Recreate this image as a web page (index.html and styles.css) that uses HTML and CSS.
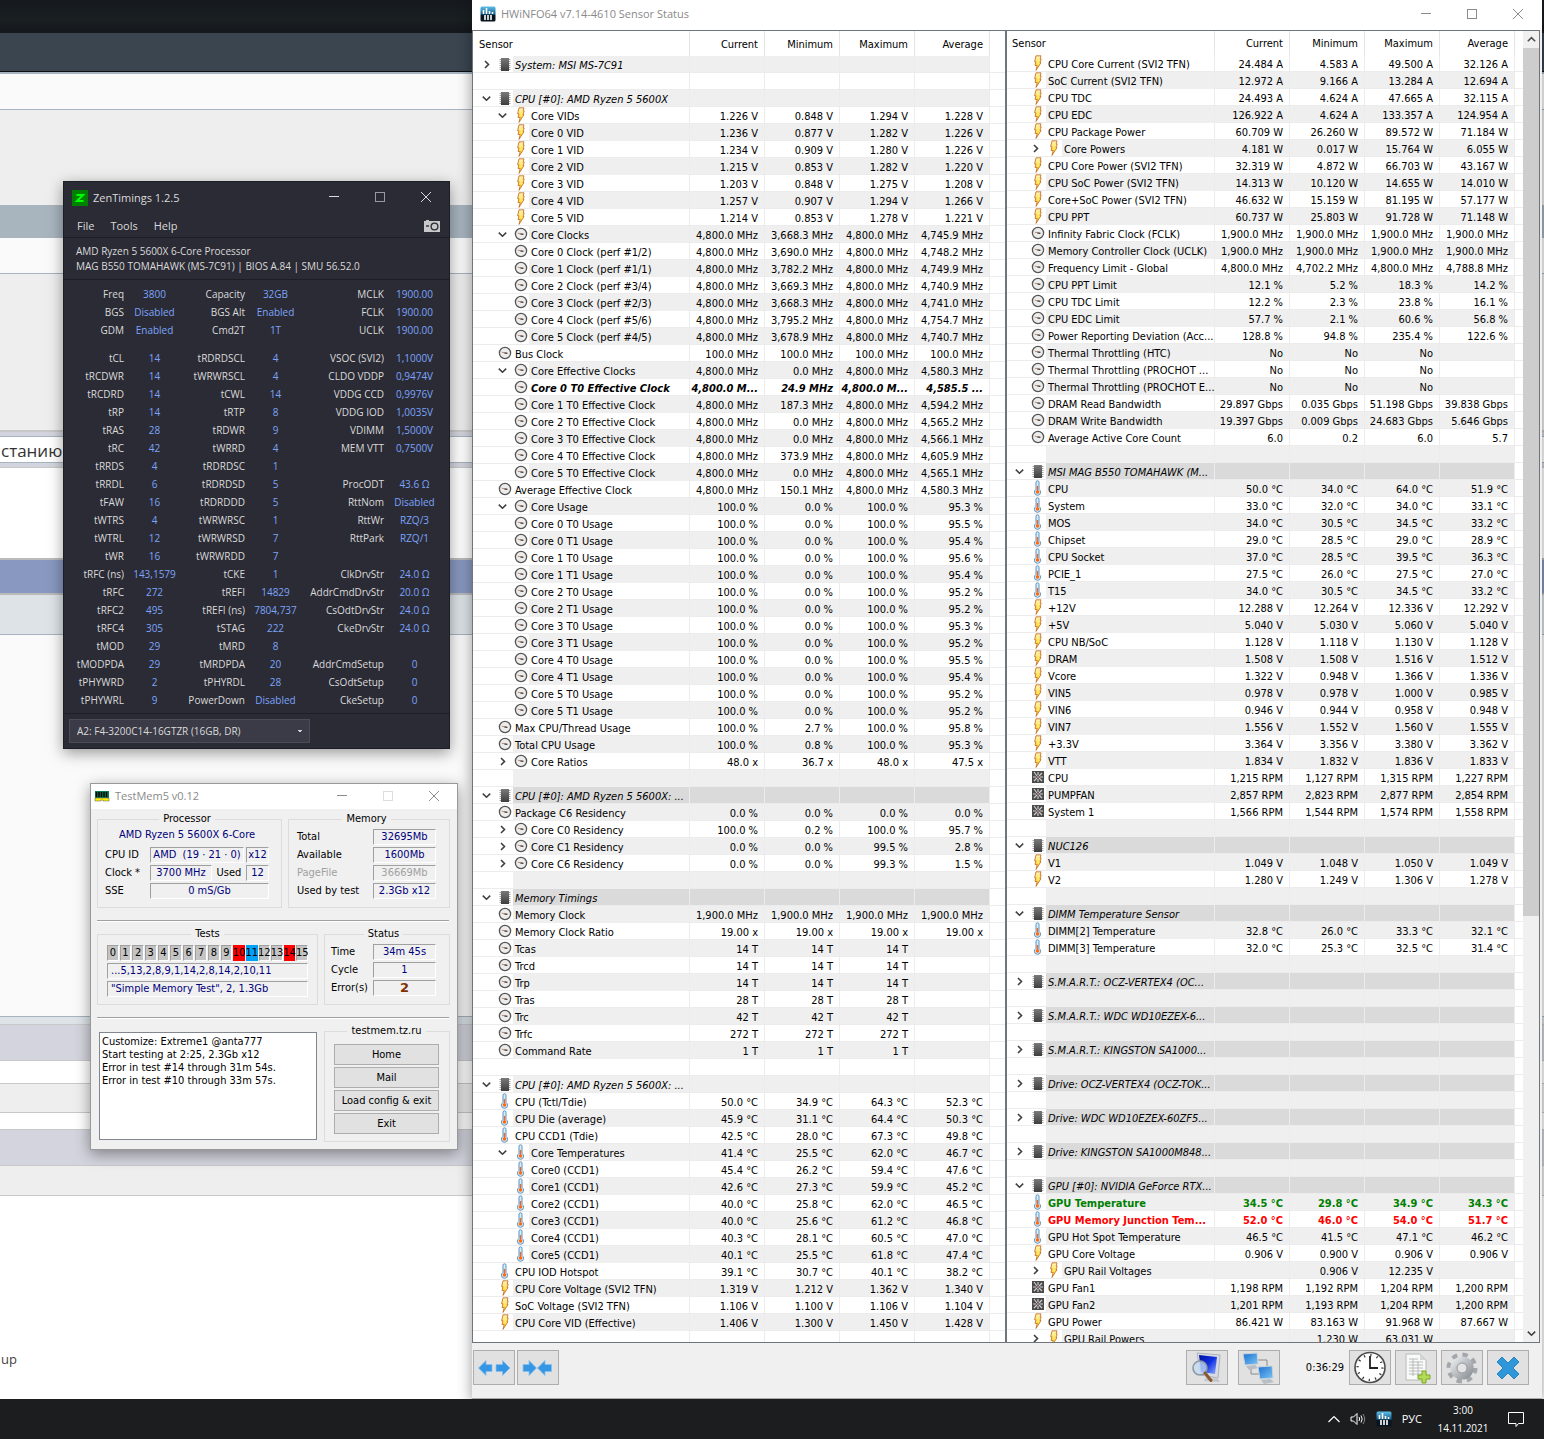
FILE: index.html
```html
<!DOCTYPE html>
<html lang="en">
  <head>
    <meta charset="UTF-8" />
    <meta name="viewport" content="width=device-width, initial-scale=1.0" />
    <title>Memory test desktop</title>
    <link rel="stylesheet" href="styles.css" />
  </head>
  <body>
    <!-- Icons -->
    <svg class="sprite" aria-hidden="true">
      <defs>
        <linearGradient id="g-bolt" x1="0" y1="0" x2="0" y2="1">
          <stop offset="0" stop-color="#fff3b8" />
          <stop offset="1" stop-color="#ffd800" />
        </linearGradient>
        <linearGradient id="g-chip" x1="0" y1="0" x2="0" y2="1">
          <stop offset="0" stop-color="#7a7a7a" />
          <stop offset="1" stop-color="#3e3e40" />
        </linearGradient>
        <linearGradient id="g-hw" x1="0" y1="0" x2="0" y2="1">
          <stop offset="0" stop-color="#5fc0ec" />
          <stop offset="0.5" stop-color="#17608c" />
          <stop offset="0.6" stop-color="#081420" />
        </linearGradient>
        <linearGradient id="g-blue" x1="0" y1="0" x2="1" y2="1">
          <stop offset="0" stop-color="#1a6fd0" />
          <stop offset="1" stop-color="#7cc4f5" />
        </linearGradient>
        <linearGradient id="g-screen" x1="0" y1="0" x2="1" y2="1">
          <stop offset="0" stop-color="#0010a0" />
          <stop offset="0.5" stop-color="#1030e0" />
          <stop offset="1" stop-color="#90b0ff" />
        </linearGradient>
        <linearGradient id="g-steel" x1="0" y1="0" x2="1" y2="1">
          <stop offset="0" stop-color="#e4e6e8" />
          <stop offset="1" stop-color="#8f9499" />
        </linearGradient>
      </defs>
      <symbol id="i-bolt" viewBox="0 0 16 16">
        <path d="M6 .8H11L10.2 4H11.2L10 7.6H11L6 15.4L7.2 10.4H5L6 6.8H4.6Z" fill="url(#g-bolt)" stroke="#c06420" stroke-width=".8" />
      </symbol>
      <symbol id="i-clock" viewBox="0 0 16 16">
        <circle cx="8" cy="8" r="5.6" fill="#ececec" stroke="#555" stroke-width="1.3" />
        <path d="M4.8 7.2L7.6 7.8" stroke="#c08a70" stroke-width="1" />
        <path d="M7.4 7.8L10.4 8.4" stroke="#333" stroke-width="1.2" />
      </symbol>
      <symbol id="i-temp" viewBox="0 0 16 16">
        <path d="M6 2.2Q6 .8 7.5.8T9 2.2V9.4Q10.6 10.6 10.6 12.2A3 3 0 0 1 4.4 12.2Q4.4 10.6 6 9.4Z" fill="#d8ecfa" stroke="#5c93bd" stroke-width="1" />
        <path d="M7.5 6V12" stroke="#e06a30" stroke-width="1.4" />
        <circle cx="7.5" cy="12" r="1.8" fill="#ff6a10" />
      </symbol>
      <symbol id="i-fan" viewBox="0 0 16 16">
        <rect x="2" y="2" width="12" height="12" fill="#4a4a4a" />
        <path d="M4 3L7 7M12 4L9 7M12 12L9 9M4 12L7 9M8 3V6M8 10V13M3 8H6M10 8H13" stroke="#d2d2d2" stroke-width="1.1" />
        <circle cx="8" cy="8" r="1.3" fill="#a08080" />
      </symbol>
      <symbol id="i-chip" viewBox="0 0 16 16">
        <path d="M2.5 3.5H13.5M2.5 5.5H13.5M2.5 7.5H13.5M2.5 9.5H13.5M2.5 11.5H13.5M2.5 13.5H13.5" stroke="#a5a5a5" />
        <rect x="4" y="2" width="8" height="13" fill="url(#g-chip)" />
      </symbol>
      <symbol id="i-right" viewBox="0 0 9 9">
        <path d="M3 1L6.5 4.5L3 8" fill="none" stroke="#404040" stroke-width="1.6" />
      </symbol>
      <symbol id="i-down" viewBox="0 0 9 9">
        <path d="M.8 2.6L4.5 6.2L8.2 2.6" fill="none" stroke="#404040" stroke-width="1.6" />
      </symbol>
      <symbol id="i-up" viewBox="0 0 9 9">
        <path d="M.8 6.2L4.5 2.6L8.2 6.2" fill="none" stroke="#505050" stroke-width="1.6" />
      </symbol>
      <symbol id="i-hwinfo" viewBox="0 0 16 16">
        <rect x=".5" y=".5" width="15" height="15" rx="1.5" fill="url(#g-hw)" />
        <path d="M3.5 4V8M6.5 2V8M9.5 5V8M12.5 6V8M5 9V14M8 9V14M11 9V14" stroke="#fff" stroke-width="1.6" />
      </symbol>
      <symbol id="i-min" viewBox="0 0 12 12">
        <path d="M1 5.5H11" stroke="currentColor" />
      </symbol>
      <symbol id="i-max" viewBox="0 0 12 12">
        <rect x="1.5" y="1.5" width="9" height="9" fill="none" stroke="currentColor" />
      </symbol>
      <symbol id="i-close" viewBox="0 0 12 12">
        <path d="M1 1L11 11M11 1L1 11" stroke="currentColor" />
      </symbol>
    </svg>

    <div class="desktop">
      <!-- Forum page behind the windows -->
      <div class="page">
        <div class="band top-dark"></div>
        <div class="band nav-dark"></div>
        <div class="band light first"></div>
        <div class="band grey tall"></div>
        <div class="band steel"></div>
        <div class="band light"></div>
        <div class="band grey post"></div>
        <div class="band search"><span>станию</span></div>
        <div class="band white reply"></div>
        <div class="band blue"></div>
        <div class="band ice"></div>
        <div class="band light body-text"></div>
        <div class="band ice thin"></div>
        <div class="band lilac"></div>
        <div class="band white gap-a"></div>
        <div class="band grey gap-b"></div>
        <div class="band white gap-c"></div>
        <div class="band lilac"></div>
        <div class="band grey gap-d"></div>
        <div class="band footer">up</div>
      </div>

      <!-- HWiNFO -->
      <section class="window hwinfo">
        <header class="titlebar">
          <svg class="app-icon"><use href="#i-hwinfo" /></svg>
          <h1>HWiNFO64 v7.14-4610 Sensor Status</h1>
          <div class="controls">
            <button aria-label="Minimize"><svg><use href="#i-min" /></svg></button>
            <button aria-label="Maximize"><svg><use href="#i-max" /></svg></button>
            <button aria-label="Close"><svg><use href="#i-close" /></svg></button>
          </div>
        </header>
        <div class="panes">
          <div class="pane pane-left">
            <table class="sensors" id="sensors-left"></table>
          </div>
          <div class="pane pane-right">
            <table class="sensors" id="sensors-right"></table>
            <div class="scrollbar">
              <svg><use href="#i-up" /></svg>
              <div class="track"><div class="thumb"></div></div>
              <svg><use href="#i-down" /></svg>
            </div>
          </div>
        </div>
        <footer class="toolbar">
          <button aria-label="Expand">
            <svg width="36" height="32" viewBox="0 0 36 32">
              <path d="M2.5 16L10 8.5V12.5H16V19.5H10V23.5ZM34 16L26.5 8.5V12.5H20V19.5H26.5V23.5Z" fill="#3496e4" stroke="#8cc0ea" stroke-width=".8" />
            </svg>
          </button>
          <button aria-label="Collapse">
            <svg width="36" height="32" viewBox="0 0 36 32">
              <path d="M16.5 16L9 8.5V12.5H3V19.5H9V23.5ZM17.5 16L25 8.5V12.5H31.5V19.5H25V23.5Z" fill="#3496e4" stroke="#8cc0ea" stroke-width=".8" />
            </svg>
          </button>
          <div class="tools">
            <button aria-label="Summary">
              <svg width="36" height="32" viewBox="0 0 36 32">
                <path d="M8 1L31 3L29 26L12 23Z" fill="#d8dce2" stroke="#aeb3bb" />
                <path d="M10 3L28 5L26 22L12 20Z" fill="url(#g-screen)" />
                <path d="M17 25L29 27L31 30L15 29Z" fill="#c2c6cb" />
                <circle cx="11" cy="16" r="7" fill="#c4dcf4" fill-opacity=".8" stroke="#8d98a5" stroke-width="1.6" />
                <path d="M16 21L22 28.5" stroke="#8a5a30" stroke-width="3" stroke-linecap="round" />
              </svg>
            </button>
            <button aria-label="Remote monitoring">
              <svg width="36" height="32" viewBox="0 0 36 32">
                <path d="M17 8H26V15M10 15V22H19" fill="none" stroke="#8b8b8b" />
                <path d="M5 14L14 13L17 16L8 18ZM20 28L29 27L33 30L23 32Z" fill="#b9bec4" />
                <path d="M2 2L16 1L17 12L4 13Z" fill="url(#g-blue)" stroke="#c9d2da" />
                <path d="M17 15L31 14L32 26L19 27Z" fill="url(#g-blue)" stroke="#c9d2da" />
              </svg>
            </button>
          </div>
          <span class="elapsed">0:36:29</span>
          <div class="actions">
            <button aria-label="Reset clock">
              <svg width="36" height="33" viewBox="0 0 36 33">
                <circle cx="18" cy="16.5" r="15" fill="#fff" stroke="#4a4a4a" stroke-width="1.6" />
                <circle cx="18" cy="16.5" r="12.4" fill="none" stroke="#333" stroke-width="2.4" stroke-dasharray="1.2 5.29" />
                <path d="M18 5V17H26" fill="none" stroke="#222" stroke-width="1.8" />
              </svg>
            </button>
            <button aria-label="Logging">
              <svg width="36" height="32" viewBox="0 0 36 32">
                <path d="M8 2H22L28 8V28H8Z" fill="#f8f9f8" stroke="#b8bcb8" />
                <path d="M22 2V8H28Z" fill="#d4d8d4" />
                <path d="M11 7H20M11 10H25M11 13H25M11 16H25M11 19H25M11 22H25M15 7V24M20 9V24" stroke="#a8b0ac" stroke-width=".8" />
                <path d="M24 19H28V23H32V27H28V31H24V27H20V23H24Z" fill="#b4dc50" stroke="#7aa828" />
              </svg>
            </button>
            <button aria-label="Settings">
              <svg width="36" height="32" viewBox="0 0 36 32">
                <circle cx="18" cy="16" r="13" fill="none" stroke="#a3a7ab" stroke-width="5" stroke-dasharray="5.2 5.01" />
                <circle cx="18" cy="16" r="8.4" fill="none" stroke="url(#g-steel)" stroke-width="6.4" />
                <circle cx="18" cy="16" r="5" fill="#e4e4e4" stroke="#8f9499" />
              </svg>
            </button>
            <button aria-label="Close sensors">
              <svg width="36" height="32" viewBox="0 0 36 32">
                <path d="M12 5L18 11L24 5L29 10L23 16L29 22L24 27L18 21L12 27L7 22L13 16L7 10Z" fill="#2f97d8" stroke="#2484c2" />
              </svg>
            </button>
          </div>
        </footer>
      </section>

      <!-- ZenTimings -->
      <section class="window zen">
        <header class="titlebar">
          <svg class="app-icon" viewBox="0 0 16 16">
            <rect width="16" height="16" fill="#008000" />
            <path d="M4.5 5H11L5 11H11.5" fill="none" stroke="#0f0" stroke-width="2" />
          </svg>
          <h2>ZenTimings 1.2.5</h2>
          <div class="controls">
            <button aria-label="Minimize"><svg><use href="#i-min" /></svg></button>
            <button aria-label="Maximize" class="dim"><svg><use href="#i-max" /></svg></button>
            <button aria-label="Close"><svg><use href="#i-close" /></svg></button>
          </div>
        </header>
        <nav class="menu">
          <button>File</button>
          <button>Tools</button>
          <button>Help</button>
          <button class="camera" aria-label="Screenshot">
            <svg width="16" height="12" viewBox="0 0 16 12">
              <path d="M0 1H2V0H5V1H16V12H0Z" fill="#c8c8c8" />
              <path d="M2 6H5" stroke="#2b2b35" stroke-width="1.4" />
              <circle cx="10.5" cy="6.5" r="3.4" fill="#c8c8c8" stroke="#2b2b35" stroke-width="1.3" />
            </svg>
          </button>
        </nav>
        <div class="system">
          <p>AMD Ryzen 5 5600X 6-Core Processor</p>
          <p>MAG B550 TOMAHAWK (MS-7C91) | BIOS A.84 | SMU 56.52.0</p>
        </div>
        <table class="timings" id="timings"></table>
        <div class="module">
          <select aria-label="Memory module">
            <option>A2: F4-3200C14-16GTZR (16GB, DR)</option>
          </select>
        </div>
      </section>

      <!-- TestMem5 -->
      <section class="window testmem">
        <header class="titlebar">
          <svg class="app-icon" viewBox="0 0 16 16">
            <rect x="1" y="3" width="14" height="7" fill="#0a7a50" />
            <path d="M2.5 4V9M5 4V9M7.5 4V9M10 4V9M12.5 4V9" stroke="#000" stroke-width="1.4" />
            <path d="M1 10H15V13H9V12H7V13H1Z" fill="#ffee00" stroke="#555" stroke-width=".5" />
          </svg>
          <h2>TestMem5 v0.12</h2>
          <div class="controls">
            <button aria-label="Minimize"><svg><use href="#i-min" /></svg></button>
            <button aria-label="Maximize" disabled><svg><use href="#i-max" /></svg></button>
            <button aria-label="Close"><svg><use href="#i-close" /></svg></button>
          </div>
        </header>
        <div class="tm-row">
          <fieldset class="processor">
            <legend>Processor</legend>
            <p class="cpu-name">AMD Ryzen 5 5600X 6-Core</p>
            <div class="line">
              <span class="name">CPU ID</span>
              <span class="field grow">AMD&nbsp; (19 · 21 · 0)</span>
              <span class="field small">x12</span>
            </div>
            <div class="line">
              <span class="name">Clock *</span>
              <span class="field grow">3700 MHz</span>
              <span class="used">Used</span>
              <span class="field small">12</span>
            </div>
            <div class="line">
              <span class="name">SSE</span>
              <span class="field grow">0 mS/Gb</span>
            </div>
          </fieldset>
          <fieldset class="memory">
            <legend>Memory</legend>
            <div class="line"><span>Total</span><span class="field">32695Mb</span></div>
            <div class="line"><span>Available</span><span class="field">1600Mb</span></div>
            <div class="line off"><span>PageFile</span><span class="field">36669Mb</span></div>
            <div class="line"><span>Used by test</span><span class="field">2.3Gb x12</span></div>
          </fieldset>
        </div>
        <hr />
        <div class="tm-row">
          <fieldset class="tests">
            <legend>Tests</legend>
            <div class="cells">
              <span>0</span><span>1</span><span>2</span><span>3</span><span>4</span><span>5</span><span>6</span><span>7</span><span>8</span><span>9</span><span class="failed">10</span><span class="running">11</span><span>12</span><span>13</span><span class="failed">14</span><span>15</span>
            </div>
            <p class="field">...5,13,2,8,9,1,14,2,8,14,2,10,11</p>
            <p class="field">"Simple Memory Test", 2, 1.3Gb</p>
          </fieldset>
          <fieldset class="status">
            <legend>Status</legend>
            <div class="line"><span>Time</span><span class="field">34m 45s</span></div>
            <div class="line"><span>Cycle</span><span class="field">1</span></div>
            <div class="line"><span>Error(s)</span><span class="field errors">2</span></div>
          </fieldset>
        </div>
        <hr />
        <div class="tm-row tm-bottom">
          <textarea aria-label="Log" readonly>
Customize: Extreme1 @anta777
Start testing at 2:25, 2.3Gb x12
Error in test #14 through 31m 54s.
Error in test #10 through 33m 57s.</textarea>
          <fieldset class="links">
            <legend>testmem.tz.ru</legend>
            <button>Home</button>
            <button>Mail</button>
            <button>Load config &amp; exit</button>
            <button>Exit</button>
          </fieldset>
        </div>
      </section>

      <!-- Taskbar -->
      <footer class="taskbar">
        <svg width="12" height="12" viewBox="0 0 12 12"><path d="M.5 9L6 3.5L11.5 9" fill="none" stroke="#fff" stroke-width="1.2" /></svg>
        <svg width="16" height="16" viewBox="0 0 16 16">
          <path d="M1 6H3.5L7 2.5V13.5L3.5 10H1Z" fill="none" stroke="#fff" />
          <path d="M9 6Q10.4 8 9 10M11 4.5Q13.4 8 11 11.5" fill="none" stroke="#fff" />
          <path d="M13 3Q16.4 8 13 13" fill="none" stroke="#888" />
        </svg>
        <svg width="16" height="16"><use href="#i-hwinfo" /></svg>
        <span class="lang">РУС</span>
        <div class="clock">3:00<br />14.11.2021</div>
        <svg class="notes" width="16" height="17" viewBox="0 0 16 17"><path d="M.5 1.5H15.5V12.5H10.5L8 15.5V12.5H.5Z" fill="none" stroke="#fff" /></svg>
      </footer>
    </div>

    <script src="script.js"></script>
  </body>
</html>
```
FILE: styles.css
```css
:root {
  --ui: "Open Sans", "Noto Sans", sans-serif;
  --dialog: "DejaVu Sans Condensed", "DejaVu Sans", sans-serif;
}
* {
  box-sizing: border-box;
}
body {
  margin: 0;
  font-family: var(--dialog);
  font-size: 11px;
  color: #000;
}
h1,
h2,
p {
  margin: 0;
  font-size: inherit;
  font-weight: normal;
}
button {
  font: inherit;
  color: inherit;
  padding: 0;
}
.sprite {
  position: absolute;
  width: 0;
  height: 0;
}
.desktop {
  position: relative;
  height: 100vh;
  overflow: hidden;
  background: #fff;
}

/* Forum page */
.band {
  height: 36px;
  border-bottom: 1px solid #c8c8c8;
}
.top-dark {
  height: 33px;
  border: 0;
  background: linear-gradient(#15191e, #1a1f22 60%, #14171b);
}
.nav-dark {
  height: 39px;
  background: #3a4550;
  border-color: #0c0f12;
}
.light {
  background: #fafafa;
  border-color: #a5b4c0;
}
.first {
  height: 38px;
  border-top: 2px solid #a5b4c0;
}
.grey {
  background: #eee;
}
.white {
  background: #fff;
}
.tall {
  height: 95px;
  border: 0;
}
.steel {
  height: 33px;
  background: #a8b5bf;
  border: 0;
}
.post {
  height: 158px;
  border-bottom: 2px solid #c8c8c8;
}
.search {
  padding: 4px 0;
  background: #d4d4de;
  font: 17px/24px var(--ui);
  color: #333;
}
.search span {
  display: block;
  height: 27px;
  padding: 2px 0 0 1px;
  border: 1px solid #a5b4c0;
  border-width: 1px 0;
  background: #fff;
}
.reply {
  height: 92px;
  border-bottom: 2px solid #bbb;
}
.blue {
  height: 35px;
  background: #8898c0;
  border-bottom: 2px solid #bbb;
}
.ice {
  height: 40px;
  background: #dde3e7;
  border-color: #a5b4c0;
}
.body-text {
  height: 382px;
}
.thin {
  height: 8px;
  border-color: #c8c8c8;
}
.lilac {
  background: #d4d4de;
}
.gap-a {
  height: 23px;
}
.gap-b {
  height: 29px;
}
.gap-c {
  height: 17px;
}
.gap-d {
  height: 30px;
}
.footer {
  height: auto;
  border: 0;
  padding: 153px 0 0 1px;
  font: 13px/20px var(--ui);
  color: #444;
}

/* Windows */
.window {
  position: absolute;
  display: flex;
  flex-direction: column;
  box-shadow: 0 4px 14px rgba(0, 0, 0, 0.4);
}
.titlebar {
  display: flex;
  align-items: center;
  height: 30px;
  padding-bottom: 2px;
  font: 11px/16px var(--ui);
}
.titlebar .app-icon {
  width: 16px;
  height: 16px;
  margin: 0 5px 0 8px;
}
.controls {
  display: flex;
  margin-left: auto;
}
.controls button {
  display: flex;
  align-items: center;
  justify-content: center;
  width: 46px;
  height: 28px;
  border: 0;
  background: none;
}
.controls svg {
  width: 12px;
  height: 12px;
}

/* HWiNFO */
.hwinfo {
  top: 0;
  left: 472px;
  right: 2px;
  bottom: 40px;
  border-bottom: 1px solid #aaa;
  background: #f0f0f0;
}
.hwinfo .titlebar {
  padding-right: 1px;
  background: #fff;
  color: #8a8a8a;
}
.panes {
  display: flex;
  flex: 1;
  min-height: 0;
  margin-right: 2px;
}
.pane {
  flex: 1;
  display: flex;
  align-items: flex-start;
  min-width: 0;
  overflow: hidden;
  border: 1px solid #70757c;
  background: #fff;
}
.sensors {
  flex: 1;
  table-layout: fixed;
  width: 100%;
  border-collapse: separate;
  border-spacing: 0;
}
.sensors .col-name {
  width: 208px;
}
.pane-left .col-name {
  width: 217px;
}
.sensors .col-value {
  width: 75px;
}
.sensors th {
  height: 24px;
  padding: 0 6px 0 5px;
  border-right: 1px solid #e5e5e5;
  font-weight: normal;
  text-align: right;
}
.pane-left th {
  height: 25px;
  padding: 1px 6px 0;
}
.sensors th:first-child {
  text-align: left;
}
.sensors th:last-child {
  border: 0;
}
.sensors td {
  height: 17px;
  padding: 3px 6px 0 0;
  border: solid #ececec;
  border-width: 0 1px 1px 0;
  line-height: 13px;
  text-align: right;
  white-space: nowrap;
}
.sensors td:first-child {
  padding: 0;
}
.sensors td:last-child {
  border-right: 0;
}
.cell {
  display: flex;
  height: 16px;
  text-align: left;
}
.lead {
  flex: none;
  width: 23px;
  padding: 4px 6px 0 0;
}
.pane-left .lead {
  width: 24px;
}
.lead svg {
  display: block;
  width: 9px;
  height: 9px;
  margin-left: auto;
}
.nested .lead {
  width: 39px;
}
.pane-left .nested .lead {
  width: 40px;
}
.cell .icon {
  flex: none;
  width: 16px;
  height: 16px;
}
.text {
  flex: 1;
  min-width: 0;
  height: 17px;
  padding: 3px 0 0 2px;
}
.pane-left tr:nth-child(odd) .text,
.pane-left tr:nth-child(odd) .value,
.pane-right tr:nth-child(even) .text,
.pane-right tr:nth-child(even) .value {
  background: #efefef;
}
.sensors .section .text,
.sensors .section .value {
  background: #dadada;
}
.section .text {
  height: 16px;
  font-style: italic;
}
.watched {
  font-weight: bold;
  font-style: italic;
}
.good {
  font-weight: bold;
  color: #008000;
}
.bad {
  font-weight: bold;
  color: #f00;
}
.scrollbar {
  display: flex;
  flex-direction: column;
  align-items: center;
  align-self: stretch;
  width: 16px;
  background: #f0f0f0;
}
.scrollbar svg {
  width: 9px;
  height: 9px;
  margin: 4px 0;
}
.track {
  flex: 1;
  width: 100%;
}
.thumb {
  height: 68%;
  background: #cdcdcd;
}
.toolbar {
  display: flex;
  align-items: center;
  gap: 2px;
  height: 55px;
  padding: 0 13px 6px 1px;
}
.toolbar button {
  display: flex;
  align-items: center;
  justify-content: center;
  width: 42px;
  height: 35px;
  border: 1px solid #adadad;
  background: #e1e1e1;
}
.tools {
  display: flex;
  gap: 10px;
  margin-left: auto;
}
.elapsed {
  width: 62px;
  text-align: right;
}
.actions {
  display: flex;
  gap: 4px;
  margin-left: 3px;
}

/* ZenTimings */
.zen {
  top: 181px;
  left: 63px;
  width: 387px;
  border: 1px solid #1d1d26;
  background: #2b2b35;
  color: #dadada;
  font: 10px/18px var(--ui);
}
.zen .titlebar {
  height: 32px;
  padding-bottom: 0;
}
.zen .controls {
  padding-bottom: 2px;
}
.zen .dim {
  color: #9a9a9e;
}
.menu {
  display: flex;
  align-items: center;
  height: 24px;
  padding: 0 9px 0 13px;
  border-bottom: 1px solid #1d1d26;
  font-size: 11px;
}
.menu button {
  margin-right: 16px;
  border: 0;
  background: none;
}
.menu .camera {
  display: flex;
  margin: 0 0 0 auto;
}
.system {
  padding: 6px 12px 5px;
  border-bottom: 1px solid #1d1d26;
  line-height: 15px;
}
.timings {
  table-layout: fixed;
  width: 381px;
  margin: 5px 0 4px;
  border-collapse: collapse;
}
.timings th,
.timings td {
  width: 61px;
  height: 18px;
  padding: 0;
  line-height: 18px;
  white-space: nowrap;
}
.timings th {
  width: 60px;
  font-weight: normal;
  text-align: right;
}
.timings th:nth-child(5) {
  width: 78px;
}
.timings td {
  color: #7ba4fa;
  text-align: center;
}
.timings .spaced th,
.timings .spaced td {
  height: 28px;
  padding-top: 10px;
}
.module {
  padding: 5px;
  border-top: 1px solid #1d1d26;
}
.module select {
  appearance: none;
  display: block;
  width: 241px;
  height: 24px;
  padding: 0 7px;
  border: 1px solid #4b4b58;
  border-radius: 0;
  background: conic-gradient(from 315deg at 50% 100%, #d2d2d2 90deg, transparent 0) right 6px top 10px / 6px 3px no-repeat, #3b3b47;
  color: #dadada;
  font: 10px/20px var(--ui);
}

/* TestMem5 */
.testmem {
  top: 783px;
  left: 90px;
  width: 368px;
  height: 367px;
  border: 1px solid #999;
  background: #f0f0f0;
}
.testmem .titlebar {
  height: 25px;
  margin-bottom: 3px;
  background: #fff;
  color: #8a8a8a;
}
.testmem .app-icon {
  margin-left: 3px;
}
.testmem .controls button:disabled {
  color: #ddd;
}
.tm-row {
  display: flex;
  gap: 6px;
  padding: 0 7px 0 6px;
}
fieldset {
  min-width: 0;
  margin: 0;
  padding: 0 9px;
  border: 1px solid #dcdcdc;
}
legend {
  height: 14px;
  margin: 0 auto;
  padding: 0 4px;
  line-height: 14px;
  text-align: center;
}
.processor,
.memory {
  height: 96px;
}
.processor {
  width: 185px;
  padding: 1px 12px 0 7px;
}
.memory {
  flex: 1;
  padding: 3px 13px 0 8px;
}
.cpu-name {
  margin-bottom: 4px;
  line-height: 16px;
  text-align: center;
  color: #00007b;
}
.line {
  display: flex;
  gap: 2px;
  justify-content: space-between;
  margin-bottom: 2px;
  line-height: 16px;
}
.name {
  width: 43px;
}
.used {
  width: 30px;
  text-align: center;
}
.field {
  height: 16px;
  border: 1px solid;
  border-color: #a0a0a0 #fff #fff #a0a0a0;
  line-height: 14px;
  text-align: center;
  white-space: nowrap;
  color: #00007b;
}
.grow {
  flex: 1;
}
.small {
  width: 23px;
}
.memory .field,
.status .field {
  width: 63px;
}
.off,
.off .field {
  color: #a0a0a0;
}
.testmem hr {
  width: 352px;
  height: 2px;
  margin: 12px 6px 5px;
  border: 0;
  border-top: 1px solid #a0a0a0;
  border-bottom: 1px solid #fff;
}
.tests {
  width: 221px;
  padding-bottom: 5px;
}
.status {
  flex: 1;
  padding: 3px 13px 0 6px;
}
.cells {
  display: flex;
  gap: 1px;
  margin: 4px 0 2px;
}
.cells span {
  display: flex;
  flex: 1;
  justify-content: center;
  min-width: 0;
  height: 16px;
  border: 1px solid;
  border-color: #a0a0a0 #fff #fff #a0a0a0;
  background: #c4c4c4;
  line-height: 14px;
}
.cells .failed {
  background: #f00;
  border-color: #f00;
}
.cells .running {
  background: #00a2f8;
  border-color: #00a2f8;
}
.tests .field {
  margin-bottom: 2px;
  padding-left: 3px;
  text-align: left;
}
.status .errors {
  font: bold 13px/14px "DejaVu Sans", sans-serif;
  color: #803000;
}
.tm-bottom textarea {
  width: 218px;
  height: 108px;
  margin: 8px 1px 0 2px;
  padding: 2px;
  border: 1px solid #82878f;
  background: #fff;
  color: #000;
  font: 11px/13px var(--dialog);
  resize: none;
}
.links {
  flex: 1;
  height: 118px;
  padding: 6px 10px 0 9px;
}
.links button {
  display: block;
  width: 100%;
  height: 21px;
  margin-bottom: 2px;
  border: 1px solid #adadad;
  background: #e1e1e1;
}

/* Taskbar */
.taskbar {
  position: absolute;
  left: 0;
  right: 0;
  bottom: 0;
  display: flex;
  align-items: center;
  justify-content: flex-end;
  gap: 10px;
  height: 40px;
  padding-right: 20px;
  background: #1b1d1f;
  color: #fff;
  font: 11px/18px var(--ui);
}
.lang {
  margin-right: 4px;
}
.clock {
  width: 54px;
  font-size: 10px;
  text-align: center;
}
.notes {
  margin-left: 8px;
}
```
FILE: script.js
```js
// Row format: level + arrow + icon | name | current | minimum | maximum | average | style
// arrows: v open, > closed, - none
// icons: s section, b bolt, c clock, t temperature, f fan
const left = `
0>s|System: MSI MS-7C91

0vs|CPU [#0]: AMD Ryzen 5 5600X
1vb|Core VIDs|1.226 V|0.848 V|1.294 V|1.228 V
1-b|Core 0 VID|1.236 V|0.877 V|1.282 V|1.226 V
1-b|Core 1 VID|1.234 V|0.909 V|1.280 V|1.226 V
1-b|Core 2 VID|1.215 V|0.853 V|1.282 V|1.220 V
1-b|Core 3 VID|1.203 V|0.848 V|1.275 V|1.208 V
1-b|Core 4 VID|1.257 V|0.907 V|1.294 V|1.266 V
1-b|Core 5 VID|1.214 V|0.853 V|1.278 V|1.221 V
1vc|Core Clocks|4,800.0 MHz|3,668.3 MHz|4,800.0 MHz|4,745.9 MHz
1-c|Core 0 Clock (perf #1/2)|4,800.0 MHz|3,690.0 MHz|4,800.0 MHz|4,748.2 MHz
1-c|Core 1 Clock (perf #1/1)|4,800.0 MHz|3,782.2 MHz|4,800.0 MHz|4,749.9 MHz
1-c|Core 2 Clock (perf #3/4)|4,800.0 MHz|3,669.3 MHz|4,800.0 MHz|4,740.9 MHz
1-c|Core 3 Clock (perf #2/3)|4,800.0 MHz|3,668.3 MHz|4,800.0 MHz|4,741.0 MHz
1-c|Core 4 Clock (perf #5/6)|4,800.0 MHz|3,795.2 MHz|4,800.0 MHz|4,754.7 MHz
1-c|Core 5 Clock (perf #4/5)|4,800.0 MHz|3,678.9 MHz|4,800.0 MHz|4,740.7 MHz
0-c|Bus Clock|100.0 MHz|100.0 MHz|100.0 MHz|100.0 MHz
1vc|Core Effective Clocks|4,800.0 MHz|0.0 MHz|4,800.0 MHz|4,580.3 MHz
1-c|Core 0 T0 Effective Clock|4,800.0 M...|24.9 MHz|4,800.0 M...|4,585.5 ...|watched
1-c|Core 1 T0 Effective Clock|4,800.0 MHz|187.3 MHz|4,800.0 MHz|4,594.2 MHz
1-c|Core 2 T0 Effective Clock|4,800.0 MHz|0.0 MHz|4,800.0 MHz|4,565.2 MHz
1-c|Core 3 T0 Effective Clock|4,800.0 MHz|0.0 MHz|4,800.0 MHz|4,566.1 MHz
1-c|Core 4 T0 Effective Clock|4,800.0 MHz|373.9 MHz|4,800.0 MHz|4,605.9 MHz
1-c|Core 5 T0 Effective Clock|4,800.0 MHz|0.0 MHz|4,800.0 MHz|4,565.1 MHz
0-c|Average Effective Clock|4,800.0 MHz|150.1 MHz|4,800.0 MHz|4,580.3 MHz
1vc|Core Usage|100.0 %|0.0 %|100.0 %|95.3 %
1-c|Core 0 T0 Usage|100.0 %|0.0 %|100.0 %|95.5 %
1-c|Core 0 T1 Usage|100.0 %|0.0 %|100.0 %|95.4 %
1-c|Core 1 T0 Usage|100.0 %|0.0 %|100.0 %|95.6 %
1-c|Core 1 T1 Usage|100.0 %|0.0 %|100.0 %|95.4 %
1-c|Core 2 T0 Usage|100.0 %|0.0 %|100.0 %|95.2 %
1-c|Core 2 T1 Usage|100.0 %|0.0 %|100.0 %|95.2 %
1-c|Core 3 T0 Usage|100.0 %|0.0 %|100.0 %|95.3 %
1-c|Core 3 T1 Usage|100.0 %|0.0 %|100.0 %|95.2 %
1-c|Core 4 T0 Usage|100.0 %|0.0 %|100.0 %|95.5 %
1-c|Core 4 T1 Usage|100.0 %|0.0 %|100.0 %|95.4 %
1-c|Core 5 T0 Usage|100.0 %|0.0 %|100.0 %|95.2 %
1-c|Core 5 T1 Usage|100.0 %|0.0 %|100.0 %|95.2 %
0-c|Max CPU/Thread Usage|100.0 %|2.7 %|100.0 %|95.8 %
0-c|Total CPU Usage|100.0 %|0.8 %|100.0 %|95.3 %
1>c|Core Ratios|48.0 x|36.7 x|48.0 x|47.5 x

0vs|CPU [#0]: AMD Ryzen 5 5600X: ...
0-c|Package C6 Residency|0.0 %|0.0 %|0.0 %|0.0 %
1>c|Core C0 Residency|100.0 %|0.2 %|100.0 %|95.7 %
1>c|Core C1 Residency|0.0 %|0.0 %|99.5 %|2.8 %
1>c|Core C6 Residency|0.0 %|0.0 %|99.3 %|1.5 %

0vs|Memory Timings
0-c|Memory Clock|1,900.0 MHz|1,900.0 MHz|1,900.0 MHz|1,900.0 MHz
0-c|Memory Clock Ratio|19.00 x|19.00 x|19.00 x|19.00 x
0-c|Tcas|14 T|14 T|14 T|
0-c|Trcd|14 T|14 T|14 T|
0-c|Trp|14 T|14 T|14 T|
0-c|Tras|28 T|28 T|28 T|
0-c|Trc|42 T|42 T|42 T|
0-c|Trfc|272 T|272 T|272 T|
0-c|Command Rate|1 T|1 T|1 T|

0vs|CPU [#0]: AMD Ryzen 5 5600X: ...
0-t|CPU (Tctl/Tdie)|50.0 °C|34.9 °C|64.3 °C|52.3 °C
0-t|CPU Die (average)|45.9 °C|31.1 °C|64.4 °C|50.3 °C
0-t|CPU CCD1 (Tdie)|42.5 °C|28.0 °C|67.3 °C|49.8 °C
1vt|Core Temperatures|41.4 °C|25.5 °C|62.0 °C|46.7 °C
1-t|Core0 (CCD1)|45.4 °C|26.2 °C|59.4 °C|47.6 °C
1-t|Core1 (CCD1)|42.6 °C|27.3 °C|59.9 °C|45.2 °C
1-t|Core2 (CCD1)|40.0 °C|25.8 °C|62.0 °C|46.5 °C
1-t|Core3 (CCD1)|40.0 °C|25.6 °C|61.2 °C|46.8 °C
1-t|Core4 (CCD1)|40.3 °C|28.1 °C|60.5 °C|47.0 °C
1-t|Core5 (CCD1)|40.1 °C|25.5 °C|61.8 °C|47.4 °C
0-t|CPU IOD Hotspot|39.1 °C|30.7 °C|40.1 °C|38.2 °C
0-b|CPU Core Voltage (SVI2 TFN)|1.319 V|1.212 V|1.362 V|1.340 V
0-b|SoC Voltage (SVI2 TFN)|1.106 V|1.100 V|1.106 V|1.104 V
0-b|CPU Core VID (Effective)|1.406 V|1.300 V|1.450 V|1.428 V

`;

const right = `
0-b|CPU Core Current (SVI2 TFN)|24.484 A|4.583 A|49.500 A|32.126 A
0-b|SoC Current (SVI2 TFN)|12.972 A|9.166 A|13.284 A|12.694 A
0-b|CPU TDC|24.493 A|4.624 A|47.665 A|32.115 A
0-b|CPU EDC|126.922 A|4.624 A|133.357 A|124.954 A
0-b|CPU Package Power|60.709 W|26.260 W|89.572 W|71.184 W
1>b|Core Powers|4.181 W|0.017 W|15.764 W|6.055 W
0-b|CPU Core Power (SVI2 TFN)|32.319 W|4.872 W|66.703 W|43.167 W
0-b|CPU SoC Power (SVI2 TFN)|14.313 W|10.120 W|14.655 W|14.010 W
0-b|Core+SoC Power (SVI2 TFN)|46.632 W|15.159 W|81.195 W|57.177 W
0-b|CPU PPT|60.737 W|25.803 W|91.728 W|71.148 W
0-c|Infinity Fabric Clock (FCLK)|1,900.0 MHz|1,900.0 MHz|1,900.0 MHz|1,900.0 MHz
0-c|Memory Controller Clock (UCLK)|1,900.0 MHz|1,900.0 MHz|1,900.0 MHz|1,900.0 MHz
0-c|Frequency Limit - Global|4,800.0 MHz|4,702.2 MHz|4,800.0 MHz|4,788.8 MHz
0-c|CPU PPT Limit|12.1 %|5.2 %|18.3 %|14.2 %
0-c|CPU TDC Limit|12.2 %|2.3 %|23.8 %|16.1 %
0-c|CPU EDC Limit|57.7 %|2.1 %|60.6 %|56.8 %
0-c|Power Reporting Deviation (Acc...|128.8 %|94.8 %|235.4 %|122.6 %
0-c|Thermal Throttling (HTC)|No|No|No|
0-c|Thermal Throttling (PROCHOT ...|No|No|No|
0-c|Thermal Throttling (PROCHOT E...|No|No|No|
0-c|DRAM Read Bandwidth|29.897 Gbps|0.035 Gbps|51.198 Gbps|39.838 Gbps
0-c|DRAM Write Bandwidth|19.397 Gbps|0.009 Gbps|24.683 Gbps|5.646 Gbps
0-c|Average Active Core Count|6.0|0.2|6.0|5.7

0vs|MSI MAG B550 TOMAHAWK (M...
0-t|CPU|50.0 °C|34.0 °C|64.0 °C|51.9 °C
0-t|System|33.0 °C|32.0 °C|34.0 °C|33.1 °C
0-t|MOS|34.0 °C|30.5 °C|34.5 °C|33.2 °C
0-t|Chipset|29.0 °C|28.5 °C|29.0 °C|28.9 °C
0-t|CPU Socket|37.0 °C|28.5 °C|39.5 °C|36.3 °C
0-t|PCIE_1|27.5 °C|26.0 °C|27.5 °C|27.0 °C
0-t|T15|34.0 °C|30.5 °C|34.5 °C|33.2 °C
0-b|+12V|12.288 V|12.264 V|12.336 V|12.292 V
0-b|+5V|5.040 V|5.030 V|5.060 V|5.040 V
0-b|CPU NB/SoC|1.128 V|1.118 V|1.130 V|1.128 V
0-b|DRAM|1.508 V|1.508 V|1.516 V|1.512 V
0-b|Vcore|1.322 V|0.948 V|1.366 V|1.336 V
0-b|VIN5|0.978 V|0.978 V|1.000 V|0.985 V
0-b|VIN6|0.946 V|0.944 V|0.958 V|0.948 V
0-b|VIN7|1.556 V|1.552 V|1.560 V|1.555 V
0-b|+3.3V|3.364 V|3.356 V|3.380 V|3.362 V
0-b|VTT|1.834 V|1.832 V|1.836 V|1.833 V
0-f|CPU|1,215 RPM|1,127 RPM|1,315 RPM|1,227 RPM
0-f|PUMPFAN|2,857 RPM|2,823 RPM|2,877 RPM|2,854 RPM
0-f|System 1|1,566 RPM|1,544 RPM|1,574 RPM|1,558 RPM

0vs|NUC126
0-b|V1|1.049 V|1.048 V|1.050 V|1.049 V
0-b|V2|1.280 V|1.249 V|1.306 V|1.278 V

0vs|DIMM Temperature Sensor
0-t|DIMM[2] Temperature|32.8 °C|26.0 °C|33.3 °C|32.1 °C
0-t|DIMM[3] Temperature|32.0 °C|25.3 °C|32.5 °C|31.4 °C

0>s|S.M.A.R.T.: OCZ-VERTEX4 (OC...

0>s|S.M.A.R.T.: WDC WD10EZEX-6...

0>s|S.M.A.R.T.: KINGSTON SA1000...

0>s|Drive: OCZ-VERTEX4 (OCZ-TOK...

0>s|Drive: WDC WD10EZEX-60ZF5...

0>s|Drive: KINGSTON SA1000M848...

0vs|GPU [#0]: NVIDIA GeForce RTX...
0-t|GPU Temperature|34.5 °C|29.8 °C|34.9 °C|34.3 °C|good
0-t|GPU Memory Junction Tem...|52.0 °C|46.0 °C|54.0 °C|51.7 °C|bad
0-t|GPU Hot Spot Temperature|46.5 °C|41.5 °C|47.1 °C|46.2 °C
0-b|GPU Core Voltage|0.906 V|0.900 V|0.906 V|0.906 V
1>b|GPU Rail Voltages||0.906 V|12.235 V|
0-f|GPU Fan1|1,198 RPM|1,192 RPM|1,204 RPM|1,200 RPM
0-f|GPU Fan2|1,201 RPM|1,193 RPM|1,204 RPM|1,200 RPM
0-b|GPU Power|86.421 W|83.163 W|91.968 W|87.667 W
1>b|GPU Rail Powers||1.230 W|63.031 W|
`;

const timings = `
Freq|3800|Capacity|32GB|MCLK|1900.00
BGS|Disabled|BGS Alt|Enabled|FCLK|1900.00
GDM|Enabled|Cmd2T|1T|UCLK|1900.00
tCL|14|tRDRDSCL|4|VSOC (SVI2)|1,1000V
tRCDWR|14|tWRWRSCL|4|CLDO VDDP|0,9474V
tRCDRD|14|tCWL|14|VDDG CCD|0,9976V
tRP|14|tRTP|8|VDDG IOD|1,0035V
tRAS|28|tRDWR|9|VDIMM|1,5000V
tRC|42|tWRRD|4|MEM VTT|0,7500V
tRRDS|4|tRDRDSC|1||
tRRDL|6|tRDRDSD|5|ProcODT|43.6 Ω
tFAW|16|tRDRDDD|5|RttNom|Disabled
tWTRS|4|tWRWRSC|1|RttWr|RZQ/3
tWTRL|12|tWRWRSD|7|RttPark|RZQ/1
tWR|16|tWRWRDD|7||
tRFC (ns)|143,1579|tCKE|1|ClkDrvStr|24.0 Ω
tRFC|272|tREFI|14829|AddrCmdDrvStr|20.0 Ω
tRFC2|495|tREFI (ns)|7804,737|CsOdtDrvStr|24.0 Ω
tRFC4|305|tSTAG|222|CkeDrvStr|24.0 Ω
tMOD|29|tMRD|8||
tMODPDA|29|tMRDPDA|20|AddrCmdSetup|0
tPHYWRD|2|tPHYRDL|28|CsOdtSetup|0
tPHYWRL|9|PowerDown|Disabled|CkeSetup|0
`;

const icons = { s: "chip", b: "bolt", c: "clock", t: "temp", f: "fan" };
const arrows = { v: "down", ">": "right" };

function use(name, cls) {
  return `<svg class="${cls}"><use href="#i-${name}" /></svg>`;
}

function sensorRow(line) {
  const [code, name = "", ...rest] = line.split("|");
  const [level, arrow, icon] = code;
  const classes = [];
  if (icon === "s") classes.push("section");
  if (level === "1") classes.push("nested");
  if (rest[4]) classes.push(rest[4]);

  let cells = "";
  for (let i = 0; i < 4; i++) {
    cells += `<td class="value">${rest[i] || ""}</td>`;
  }
  return `<tr class="${classes.join(" ")}">
    <td><div class="cell">
      <span class="lead">${arrows[arrow] ? use(arrows[arrow], "arrow") : ""}</span>
      ${icon ? use(icons[icon], "icon") : '<span class="icon"></span>'}
      <span class="text">${name}</span>
    </div></td>${cells}<td></td></tr>`;
}

function fillSensors(id, data) {
  const lines = data.slice(1, -1).split("\n");
  document.getElementById(id).innerHTML = `
    <colgroup>
      <col class="col-name" /><col class="col-value" /><col class="col-value" />
      <col class="col-value" /><col class="col-value" /><col />
    </colgroup>
    <thead><tr><th>Sensor</th><th>Current</th><th>Minimum</th><th>Maximum</th><th>Average</th><th></th></tr></thead>
    <tbody>${lines.map(sensorRow).join("")}</tbody>`;
}

function fillTimings() {
  const rows = timings.trim().split("\n").map((line, n) => {
    const cells = line.split("|").map((v, i) => (i % 2 ? `<td>${v}</td>` : `<th>${v}</th>`));
    return `<tr class="${n === 3 ? "spaced" : ""}">${cells.join("")}</tr>`;
  });
  document.getElementById("timings").innerHTML = rows.join("");
}

fillSensors("sensors-left", left);
fillSensors("sensors-right", right);
fillTimings();
```
